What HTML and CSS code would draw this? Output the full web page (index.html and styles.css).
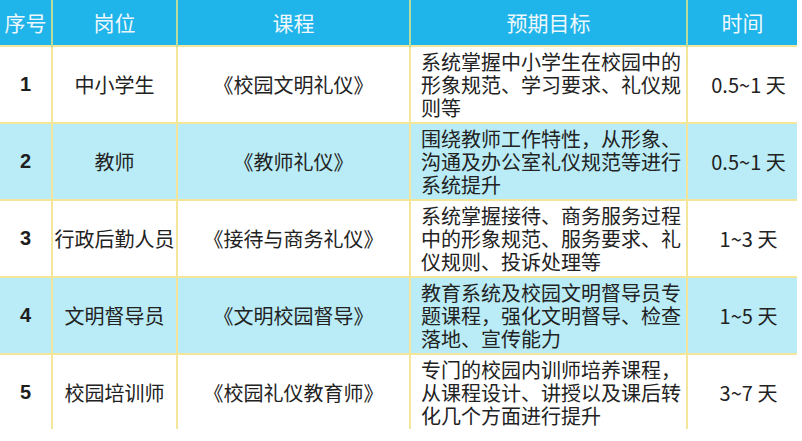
FILE: index.html
```html
<!DOCTYPE html>
<html lang="zh">
<head>
<meta charset="utf-8">
<link rel="stylesheet" href="styles.css">
</head>
<body>
<table class="plan">
  <colgroup>
    <col class="c-no"><col class="c-role"><col class="c-course"><col class="c-goal"><col class="c-time">
  </colgroup>
  <thead>
    <tr><th>序号</th><th>岗位</th><th>课程</th><th>预期目标</th><th>时间</th></tr>
  </thead>
  <tbody>
    <tr>
      <td class="no">1</td><td class="role">中小学生</td><td class="course">《校园文明礼仪》</td>
      <td class="goal">系统掌握中小学生在校园中的<br>形象规范、学习要求、礼仪规<br>则等</td><td class="time">0.5~1 天</td>
    </tr>
    <tr class="alt">
      <td class="no">2</td><td class="role">教师</td><td class="course">《教师礼仪》</td>
      <td class="goal">围绕教师工作特性，从形象、<br>沟通及办公室礼仪规范等进行<br>系统提升</td><td class="time">0.5~1 天</td>
    </tr>
    <tr>
      <td class="no">3</td><td class="role">行政后勤人员</td><td class="course">《接待与商务礼仪》</td>
      <td class="goal">系统掌握接待、商务服务过程<br>中的形象规范、服务要求、礼<br>仪规则、投诉处理等</td><td class="time">1~3 天</td>
    </tr>
    <tr class="alt">
      <td class="no">4</td><td class="role">文明督导员</td><td class="course">《文明校园督导》</td>
      <td class="goal">教育系统及校园文明督导员专<br>题课程，强化文明督导、检查<br>落地、宣传能力</td><td class="time">1~5 天</td>
    </tr>
    <tr class="last">
      <td class="no">5</td><td class="role">校园培训师</td><td class="course">《校园礼仪教育师》</td>
      <td class="goal">专门的校园内训师培养课程，<br>从课程设计、讲授以及课后转<br>化几个方面进行提升</td><td class="time">3~7 天</td>
    </tr>
  </tbody>
</table>
</body>
</html>
```
FILE: styles.css
```css
html, body {
  margin: 0;
  padding: 0;
  background: #ffffff;
}
body {
  font-family: "Noto Sans CJK SC", "Noto Sans", sans-serif;
  color: #222222;
}
.plan {
  border-collapse: collapse;
  table-layout: fixed;
  width: 797px;
}
.c-no { width: 52px; }
.c-role { width: 125px; }
.c-course { width: 233px; }
.c-goal { width: 277px; }
.c-time { width: 110px; }

.plan th {
  background: #1fb4ea;
  color: #eef8fc;
  font-weight: normal;
  font-size: 21px;
  height: 45px;
  padding: 0;
  text-align: center;
  vertical-align: middle;
  border-left: 2px solid #b9dc9a;
  border-right: 2px solid #b9dc9a;
  border-bottom: 1px solid #f2e7a0;
  line-height: 1;
}
.plan th:first-child { border-left: none; }
.plan th:last-child { border-right: none; }

.plan td {
  border: 2px solid #f3e69b;
  height: 75px;
  padding: 0;
  text-align: center;
  vertical-align: middle;
  font-size: 20px;
  line-height: 23px;
}
.plan td:first-child { border-left: none; }
.plan td:last-child { border-right: none; }
.plan tr.last td { border-bottom: none; height: 74px; }

.plan tr.alt td { background: #b9ecf6; }

.plan td.no {
  font-family: "Liberation Sans", Arial, sans-serif;
  font-weight: bold;
  font-size: 20px;
  color: #1e1e1e;
}
.plan td.goal {
  text-align: left;
  padding: 0 6px 0 10px;
  white-space: nowrap;
  overflow: hidden;
}
.plan td.time {
  padding-left: 12px;
  font-size: 20px;
}
```
